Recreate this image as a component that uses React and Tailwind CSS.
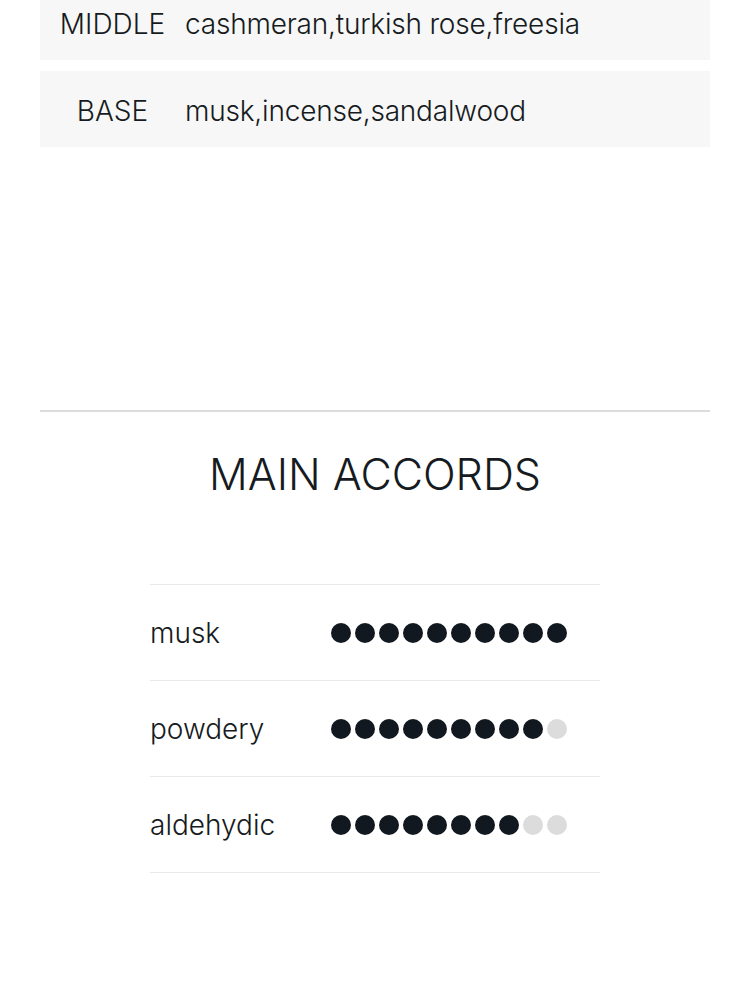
import React from "react";

const notes = [
  { label: "MIDDLE", value: "cashmeran,turkish rose,freesia" },
  { label: "BASE", value: "musk,incense,sandalwood" },
];

const accords = [
  { name: "musk", value: 10 },
  { name: "powdery", value: 9 },
  { name: "aldehydic", value: 8 },
];

export default function App() {
  return (
    <div className="w-[750px] h-[1000px] overflow-hidden bg-white text-[#161b21] font-light" style={{ fontFamily: "Inter, 'Noto Sans', sans-serif" }}>
      <div className="px-10 mt-[-16px] flex flex-col gap-[11px]">
        {notes.map((n) => (
          <div key={n.label} className="h-[76px] pt-[3px] bg-[#f7f7f7] flex items-center">
            <div className="w-[145px] text-center text-[28px] leading-none">{n.label}</div>
            <div className="text-[28px] leading-none tracking-[-0.2px]">{n.value}</div>
          </div>
        ))}
      </div>
      <div className="mx-10 mt-[263px] h-[2px] bg-[#dcdcdc]" />
      <h2 className="mt-[36px] text-center text-[43px] leading-[52px] font-light">MAIN ACCORDS</h2>
      <div className="mx-[150px] mt-[84px] border-t border-[#e8e8e8]">
        {accords.map((a) => (
          <div key={a.name} className="h-[96px] border-b border-[#e8e8e8] flex items-center">
            <div className="w-[181px] text-[28px] leading-none">{a.name}</div>
            <div className="flex gap-1">
              {Array.from({ length: 10 }).map((_, i) => (
                <span key={i} className={`w-5 h-5 rounded-full ${i < a.value ? "bg-[#111820]" : "bg-[#dcdcdc]"}`} />
              ))}
            </div>
          </div>
        ))}
      </div>
    </div>
  );
}
